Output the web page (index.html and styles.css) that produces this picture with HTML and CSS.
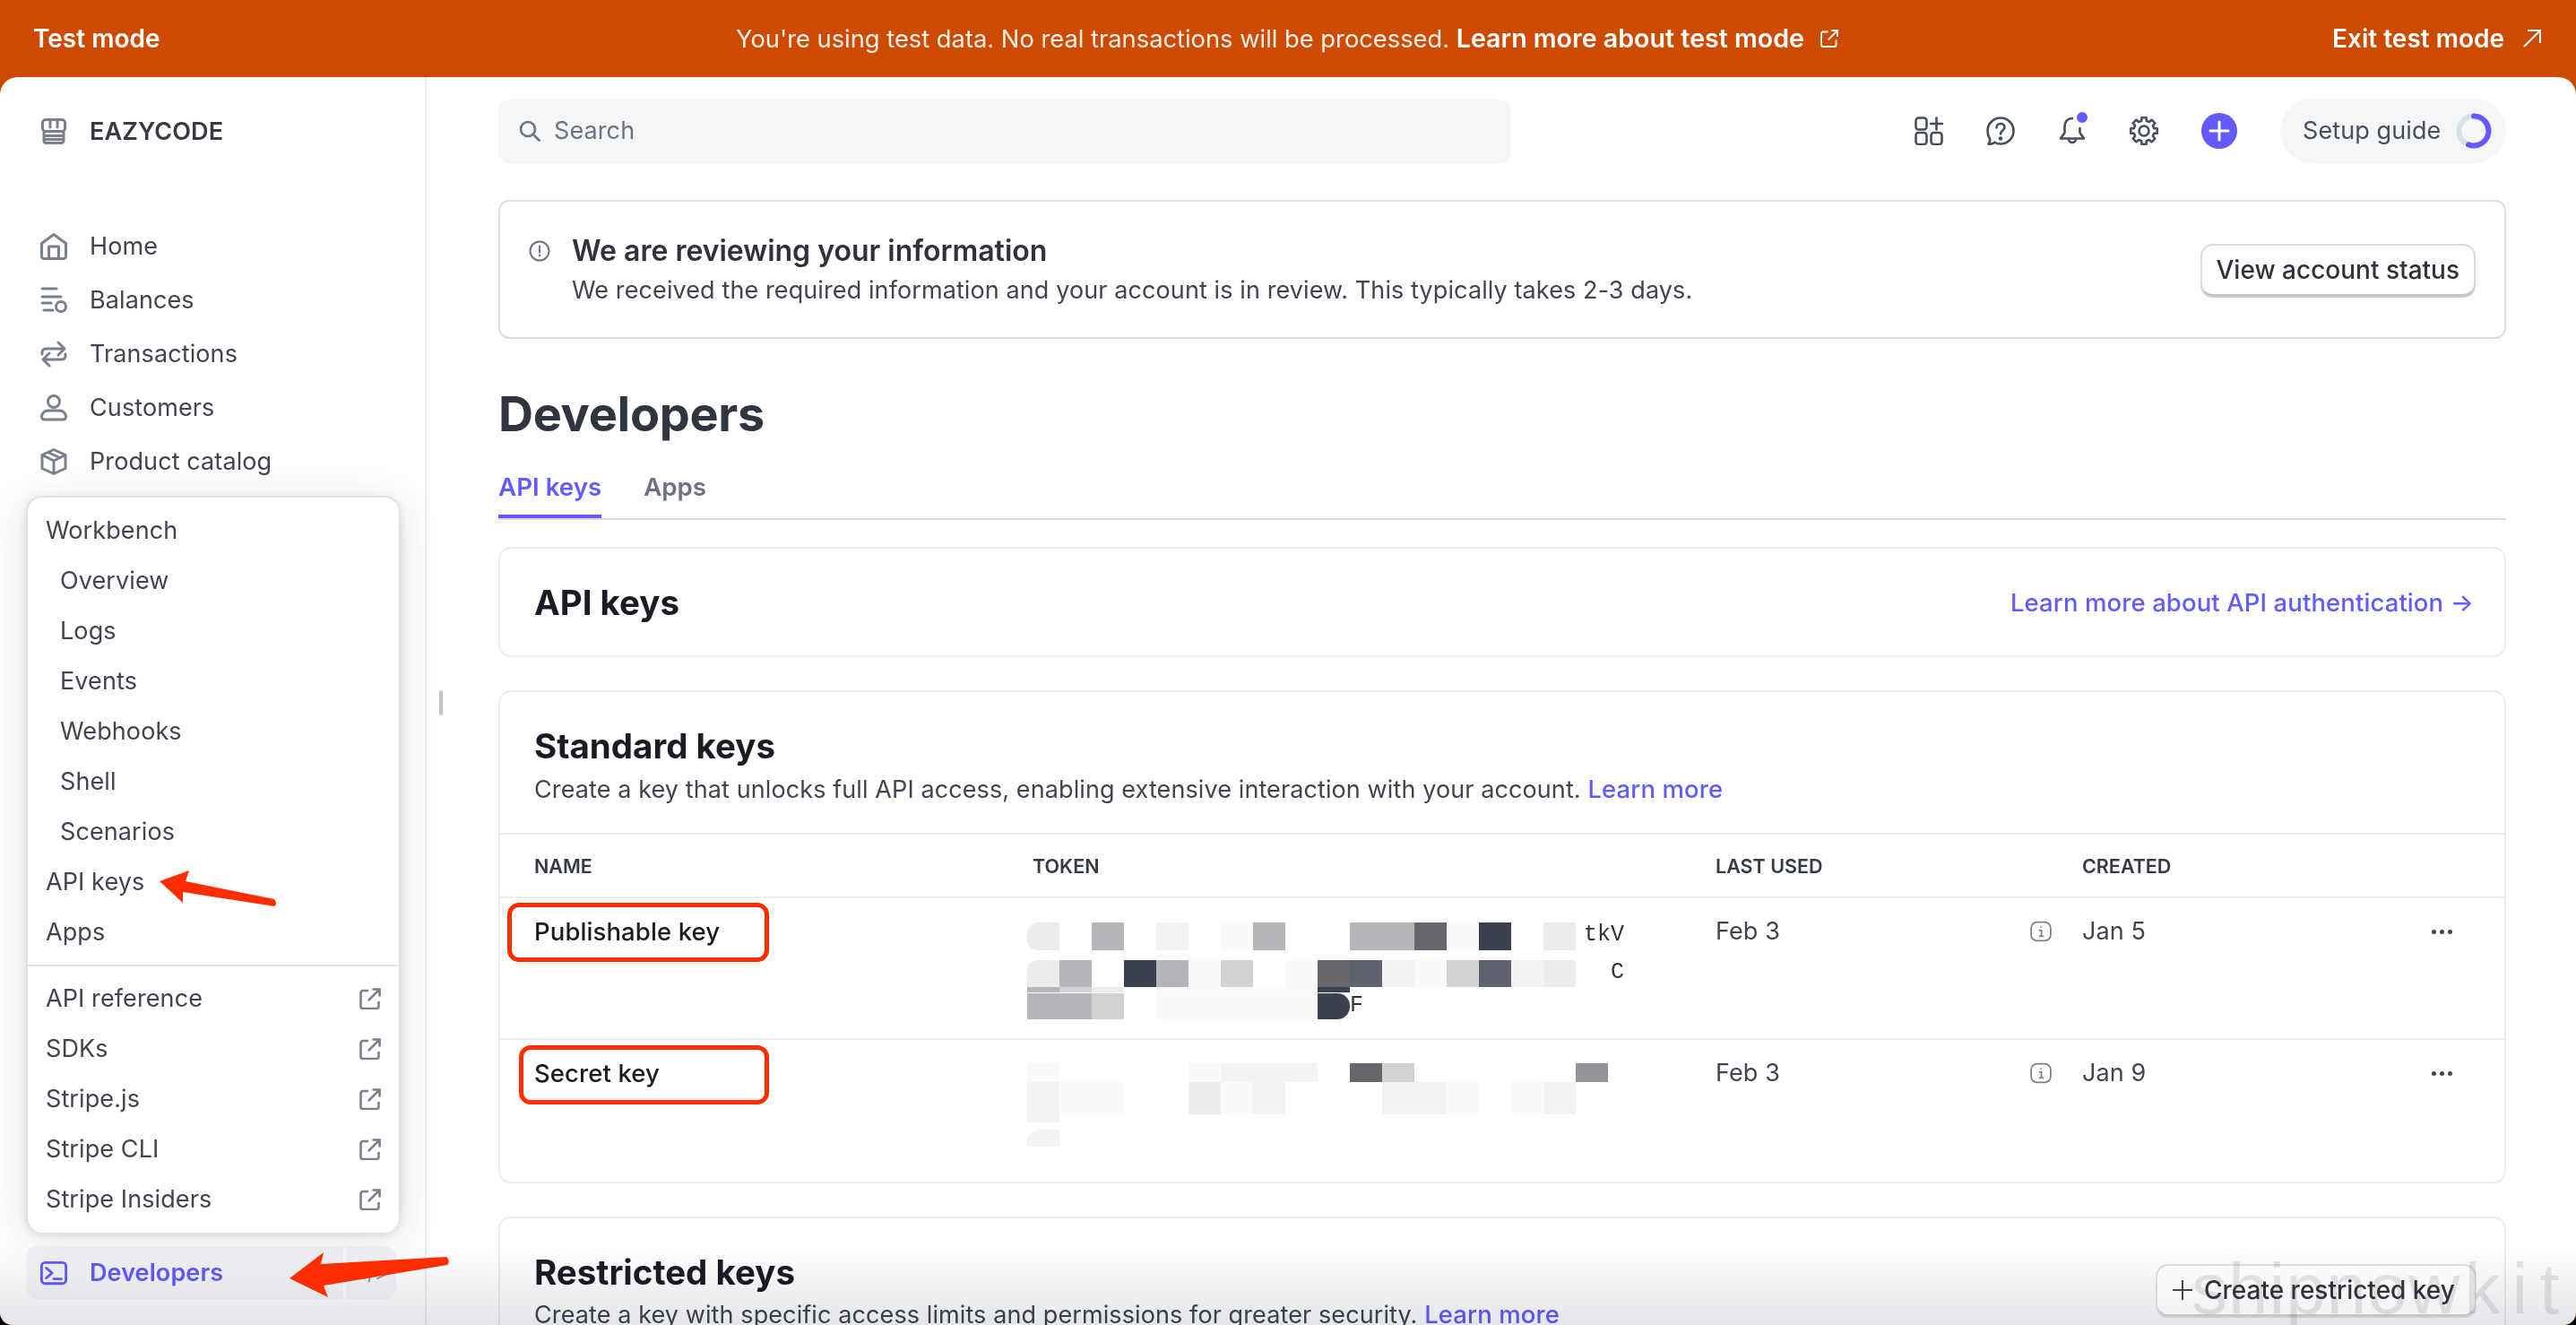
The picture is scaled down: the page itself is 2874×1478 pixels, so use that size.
FILE: index.html
```html
<!DOCTYPE html>
<html>

<head>
    <title>Developers - API keys</title>
    <meta name="viewport" content="width=device-width, initial-scale=1">
    <link rel="stylesheet" href="styles.css">
</head>

<body>
    <div class="window">
        <div class="testbar">
            <div class="testbar-label">Test mode</div>
            <div class="testbar-msg">
                <span>You're using test data. No real transactions will be processed. <b>Learn more about test mode</b></span>
                <svg class="ext-small" viewBox="0 0 16 16"><path d="M7 2.500H3a1.500 1.500 0 0 0-1.500 1.500v9A1.500 1.500 0 0 0 3 14.500h9a1.500 1.500 0 0 0 1.500-1.500V9M9.500 1.500h5v5M14.500 1.500L7 9"/></svg>
            </div>
            <div class="testbar-exit">Exit test mode
                <svg class="exit-arrow" viewBox="0 0 22 22"><path d="M2 20L20 2M6 2h14v14"/></svg>
            </div>
        </div>

        <div class="app">
            <div class="sidebar">
                <div class="brand">
                    <svg class="nav-icon" viewBox="0 0 30 30"><path d="M4 15V25a2.500 2.500 0 0 0 2.500 2.500h17A2.500 2.500 0 0 0 26 25V15M2.500 5a3.500 3.500 0 0 1 3.500-3.500h18A3.500 3.500 0 0 1 27.500 5v6a3.500 3.500 0 0 1-3.500 3.500H6A3.500 3.500 0 0 1 2.500 11zM11 2v8M19 2v8M4 19.500h22M4 23.500h22"/></svg>
                    <span>EAZYCODE</span>
                </div>
                <div class="nav">
                    <div class="nav-item">
                        <svg class="nav-icon" viewBox="0 0 30 30"><path d="M1.500 11.500L15 1.500l13.500 10V26a2.500 2.500 0 0 1-2.500 2.500H4A2.500 2.500 0 0 1 1.500 26zM9.500 28.500V15h11v13.500"/></svg>
                        Home
                    </div>
                    <div class="nav-item">
                        <svg class="nav-icon" viewBox="0 0 30 30"><path d="M2 2h16M2 11h21M2 18h10M4 26h10"/><circle cx="23" cy="22" r="5.500"/></svg>
                        Balances
                    </div>
                    <div class="nav-item">
                        <svg class="nav-icon" viewBox="0 0 30 30"><path d="M2 15v-2a4 4 0 0 1 4-4h21M20 2l7 7-7 7M28 15v2a4 4 0 0 1-4 4H3M10 14l-7 7 7 7"/></svg>
                        Transactions
                    </div>
                    <div class="nav-item">
                        <svg class="nav-icon" viewBox="0 0 30 30"><circle cx="15" cy="8" r="6.500"/><path d="M1.500 25a7 7 0 0 1 7-7h13a7 7 0 0 1 7 7 3 3 0 0 1-3 3h-21a3 3 0 0 1-3-3z"/></svg>
                        Customers
                    </div>
                    <div class="nav-item">
                        <svg class="nav-icon" viewBox="0 0 30 30"><path d="M15 1.500L28 7.500v15L15 28.500 2 22.500v-15zM2 7.500l13 6.500 13-6.500M15 14v14.500M8.500 4.500l13 6"/></svg>
                        Product catalog
                    </div>
                </div>

                <div class="dev-row">
                    <svg class="nav-icon" viewBox="0 0 32 28"><rect x="1.500" y="1.500" width="29" height="25" rx="4"/><path d="M7 8l7 6-7 6M16 21h9"/></svg>
                    <span>Developers</span>
                    <div class="dev-pin">&lt;/&gt;</div>
                </div>

                <div class="popup">
                    <div class="popup-item">Workbench</div>
                    <div class="popup-item sub">Overview</div>
                    <div class="popup-item sub">Logs</div>
                    <div class="popup-item sub">Events</div>
                    <div class="popup-item sub">Webhooks</div>
                    <div class="popup-item sub">Shell</div>
                    <div class="popup-item sub">Scenarios</div>
                    <div class="popup-item">API keys</div>
                    <div class="popup-item">Apps</div>
                    <div class="popup-sep"></div>
                    <div class="popup-item">API reference <svg class="ext" viewBox="0 0 24 24"><path d="M10 3H4a2.500 2.500 0 0 0-2.500 2.500v15A2.500 2.500 0 0 0 4 23h15a2.500 2.500 0 0 0 2.500-2.500V15M14.500 1.500h8v8M22.500 1.500L10 14"/></svg></div>
                    <div class="popup-item">SDKs <svg class="ext" viewBox="0 0 24 24"><path d="M10 3H4a2.500 2.500 0 0 0-2.500 2.500v15A2.500 2.500 0 0 0 4 23h15a2.500 2.500 0 0 0 2.500-2.500V15M14.500 1.500h8v8M22.500 1.500L10 14"/></svg></div>
                    <div class="popup-item">Stripe.js <svg class="ext" viewBox="0 0 24 24"><path d="M10 3H4a2.500 2.500 0 0 0-2.500 2.500v15A2.500 2.500 0 0 0 4 23h15a2.500 2.500 0 0 0 2.500-2.500V15M14.500 1.500h8v8M22.500 1.500L10 14"/></svg></div>
                    <div class="popup-item">Stripe CLI <svg class="ext" viewBox="0 0 24 24"><path d="M10 3H4a2.500 2.500 0 0 0-2.500 2.500v15A2.500 2.500 0 0 0 4 23h15a2.500 2.500 0 0 0 2.500-2.500V15M14.500 1.500h8v8M22.500 1.500L10 14"/></svg></div>
                    <div class="popup-item">Stripe Insiders <svg class="ext" viewBox="0 0 24 24"><path d="M10 3H4a2.500 2.500 0 0 0-2.500 2.500v15A2.500 2.500 0 0 0 4 23h15a2.500 2.500 0 0 0 2.500-2.500V15M14.500 1.500h8v8M22.500 1.500L10 14"/></svg></div>
                </div>
                <div class="resize-handle"></div>
            </div>

            <div class="main">
                <div class="topbar">
                    <div class="search">
                        <svg class="search-icon" viewBox="0 0 24 24"><circle cx="10" cy="10" r="8"/><path d="M16 16l6.500 6.500"/></svg>
                        Search
                    </div>
                    <div class="top-actions">
                        <svg class="top-icon" viewBox="0 0 32 32"><rect x="1.500" y="1.500" width="12" height="13" rx="3"/><rect x="1.500" y="18" width="12" height="13" rx="3"/><rect x="18.500" y="18" width="12" height="13" rx="3"/><path d="M24.500 1.500v13M18 8h13"/></svg>
                        <svg class="top-icon" viewBox="0 0 32 32"><path d="M16 1.500c8 0 14.500 6.500 14.500 14.500S24 30.500 16 30.500c-3 0-5-.7-6.500-1.800-1.500 1.300-4 2.300-7 1.800 1.500-1.500 1.800-3.500 1.500-5.500C2.500 22.500 1.500 19.500 1.500 16 1.500 8 8 1.500 16 1.500z"/><path d="M11.500 12.500c0-6 9-6 9-.5 0 3.500-4.500 3.500-4.500 7.500"/><circle class="dot" cx="16" cy="24.500" r="1"/></svg>
                        <div class="bell">
                            <svg class="top-icon" viewBox="0 0 32 32"><path d="M16 2c-5 0-8.500 3.500-8.500 9v7L3 24.500h26L24.500 18v-5M12 24.500c0 6 8 6 8 0"/></svg>
                            <span class="bell-dot"></span>
                        </div>
                        <svg class="top-icon" viewBox="0 0 32 32"><path d="M13.200 4.800L13.400 1.200H18.600L18.800 4.800 21.900 6.100 24.600 3.700 28.300 7.400 25.900 10.100 27.200 13.200 30.800 13.400V18.600L27.200 18.800 25.900 21.900 28.300 24.600 24.600 28.300 21.900 25.900 18.800 27.200 18.600 30.800H13.400L13.200 27.200 10.100 25.900 7.400 28.300 3.700 24.600 6.100 21.900 4.800 18.800 1.200 18.600V13.400L4.800 13.200 6.100 10.100 3.700 7.400 7.400 3.700 10.100 6.100z"/><circle cx="16" cy="16" r="5.500"/></svg>
                        <div class="plus-btn"><svg viewBox="0 0 40 40"><path d="M20 10v20M10 20h20"/></svg></div>
                        <div class="setup">
                            Setup guide
                            <svg class="ring" viewBox="0 0 40 40"><circle class="ring-track" cx="20" cy="20" r="16.500"/><path class="ring-arc" d="M20 3.500A16.500 16.500 0 1 1 14 35.400"/></svg>
                        </div>
                    </div>
                </div>

                <div class="notice">
                    <svg class="notice-icon" viewBox="0 0 24 24"><circle cx="12" cy="12" r="10.500"/><path d="M12 6.500v7M12 16.500v1"/></svg>
                    <div class="notice-text">
                        <div class="notice-title">We are reviewing your information</div>
                        <div>We received the required information and your account is in review. This typically takes 2-3 days.</div>
                    </div>
                    <div class="button">View account status</div>
                </div>

                <h1>Developers</h1>
                <div class="tabs">
                    <div class="tab active">API keys</div>
                    <div class="tab">Apps</div>
                </div>

                <div class="card card-head">
                    <h2>API keys</h2>
                    <div class="link">Learn more about API authentication →</div>
                </div>

                <div class="card keys">
                    <div class="card-title">
                        <h2>Standard keys</h2>
                        <p>Create a key that unlocks full API access, enabling extensive interaction with your account. <span class="link">Learn more</span></p>
                    </div>
                    <div class="row row-head">
                        <div>NAME</div>
                        <div>TOKEN</div>
                        <div>LAST USED</div>
                        <div>CREATED</div>
                    </div>
                    <div class="row row-first">
                        <div class="key-name">Publishable key</div>
                        <div class="mosaic">
                            <div class="m-row h31 after-one"><i class="g3 left"></i><i></i><i class="g5"></i><i></i><i class="g2"></i><i></i><i class="g1"></i><i class="g5"></i><i></i><i></i><i class="g5"></i><i class="g5"></i><i class="g7"></i><i class="g1"></i><i class="g9"></i><i></i><i class="g3"></i><i class="tail">tkV</i></div>
                            <div class="m-row h30"><i class="g3 left-top"></i><i class="g5"></i><i></i><i class="g9"></i><i class="g5"></i><i class="g1"></i><i class="g4"></i><i></i><i class="g1"></i><i class="g7"></i><i class="g8"></i><i class="g2"></i><i class="g1"></i><i class="g4"></i><i class="g8"></i><i class="g2"></i><i class="g3"></i><i class="tail">C</i></div>
                            <div class="m-row h6"><i class="g5"></i><i class="g4"></i><i class="g3"></i><i></i><i class="g1"></i><i class="g1"></i><i class="g1"></i><i class="g1"></i><i class="g1"></i><i class="g9"></i></div>
                            <div class="m-row h29 after-sliver"><i class="g5"></i><i class="g5"></i><i class="g4"></i><i></i><i class="g1"></i><i class="g1"></i><i class="g1"></i><i class="g1"></i><i class="g1"></i><i class="g9 right"></i><i class="tail short">F</i></div>
                        </div>
                        <div class="used">Feb 3 <svg class="info" viewBox="0 0 22 22"><rect x="1" y="1.500" width="20" height="19" rx="6"/><path d="M9 10h2.500v6M9 16h5M11 6v1"/></svg></div>
                        <div class="created">Jan 5 <div class="dots"><i></i><i></i><i></i></div></div>
                    </div>
                    <div class="row row-second">
                        <div class="key-name">Secret key</div>
                        <div class="mosaic second">
                            <div class="m-row h21"><i class="g1"></i><i></i><i></i><i></i><i></i><i class="g1"></i><i class="g2"></i><i class="g2"></i><i class="g2"></i><i></i><i class="g7"></i><i class="g4"></i><i></i><i></i><i></i><i></i><i></i><i class="g6"></i></div>
                            <div class="m-row h36"><i class="g2"></i><i class="g1"></i><i class="g1"></i><i></i><i></i><i class="g3"></i><i class="g1"></i><i class="g2"></i><i></i><i></i><i></i><i class="g2"></i><i class="g2"></i><i class="g1"></i><i></i><i class="g1"></i><i class="g2"></i></div>
                            <div class="m-row h9"><i class="g2"></i></div>
                            <div class="m-row h19 spaced"><i class="g2 top-left"></i></div>
                        </div>
                        <div class="used">Feb 3 <svg class="info" viewBox="0 0 22 22"><rect x="1" y="1.500" width="20" height="19" rx="6"/><path d="M9 10h2.500v6M9 16h5M11 6v1"/></svg></div>
                        <div class="created">Jan 9 <div class="dots"><i></i><i></i><i></i></div></div>
                    </div>
                </div>

                <div class="card restricted">
                    <div class="card-title">
                        <h2>Restricted keys</h2>
                        <p>Create a key with specific access limits and permissions for greater security. <span class="link">Learn more</span></p>
                    </div>
                </div>
            </div>
        </div>

        <div class="fade"></div>
        <div class="button floating"><svg viewBox="0 0 24 24"><path d="M12 1v22M1 12h22"/></svg>Create restricted key</div>
        <div class="watermark">shipnow<span>kit</span></div>

        <div class="mark mark-one"></div>
        <div class="mark mark-two"></div>
        <svg class="arrows" viewBox="0 0 2874 1478">
            <path d="M178 983L211 971 207 983 306 1003Q310 1008 306 1011L204 995 204 1007z"/>
            <path d="M323 1426L361 1397 358 1410 498 1402Q503 1406 499 1411L361 1434 366 1447z"/>
        </svg>
    </div>
</body>

</html>
```

FILE: styles.css
```css
html, body {
    margin: 0;
    background: #000;
}

.window {
    position: relative;
    width: 2874px;
    height: 1478px;
    overflow: hidden;
    background: #cc4b00;
    border-radius: 0 0 14px 14px;
    font-family: Inter, "Liberation Sans", sans-serif;
    font-size: 27px;
    letter-spacing: .1px;
    line-height: 36px;
    color: #414552;
}

/* test mode banner */
.testbar {
    display: grid;
    grid-template-columns: 1fr auto 1fr;
    align-items: center;
    height: 86px;
    padding: 0 38px 0 37px;
    color: #fff;
    font-size: 28px;
    letter-spacing: 0;
}

.testbar-label {
    font-weight: 600;
}

.testbar-msg {
    display: flex;
    align-items: center;
    font-size: 27.300px;
    color: #fdf0e8;
}

.testbar-msg b {
    font-size: 28.600px;
    font-weight: 600;
    color: #fff;
}

.ext-small {
    width: 22px;
    height: 22px;
    margin-left: 17px;
    fill: none;
    stroke: #fff;
    stroke-width: 1.4;
}

.testbar-exit {
    display: flex;
    justify-content: flex-end;
    align-items: center;
    gap: 20px;
    font-weight: 600;
}

.exit-arrow {
    width: 22px;
    height: 22px;
    fill: none;
    stroke: #fff;
    stroke-width: 2;
}

.app {
    display: flex;
    height: 1392px;
    background: #fff;
    border-radius: 20px 20px 0 0;
    overflow: hidden;
}

/* sidebar */
.sidebar {
    position: relative;
    flex: none;
    display: flex;
    flex-direction: column;
    box-sizing: border-box;
    width: 476px;
    padding: 31px 32px 29px 29px;
    border-right: 2px solid #ebeef1;
}

.brand, .nav-item, .dev-row {
    display: flex;
    align-items: center;
    gap: 25px;
    padding-left: 16px;
    height: 60px;
}

.brand {
    margin-bottom: 68px;
    font-weight: 600;
    color: #353a44;
}

.nav-icon {
    flex: none;
    width: 30px;
    height: 30px;
    fill: none;
    stroke: #7b808c;
    stroke-width: 3;
    stroke-linecap: round;
    stroke-linejoin: round;
}

.dev-row {
    position: relative;
    margin-top: auto;
    height: 59px;
    background: #f5f6f8;
    border-radius: 12px;
    font-weight: 600;
    color: #635bff;
}

.dev-row .nav-icon {
    stroke: #635bff;
}

.dev-pin {
    margin-left: auto;
    align-self: stretch;
    display: flex;
    align-items: center;
    justify-content: center;
    width: 56px;
    border-left: 3px solid #fff;
    font-size: 22px;
    font-weight: 400;
    color: #8a8f9a;
}

.popup {
    position: absolute;
    left: 29px;
    top: 467px;
    width: 418px;
    box-sizing: border-box;
    padding: 9px 0;
    background: #fff;
    border: 2px solid #dfe3e8;
    border-bottom: none;
    border-radius: 18px;
    box-shadow: 0 8px 44px rgba(60, 66, 87, .16), 0 2px 8px rgba(60, 66, 87, .12);
}

.popup-item {
    display: flex;
    align-items: center;
    justify-content: space-between;
    height: 56px;
    padding: 0 20px;
}

.sub {
    padding-left: 36px;
}

.popup-sep {
    height: 2px;
    margin: 8px 0 8px;
    background: #e0e4e9;
}

.ext {
    width: 24px;
    height: 24px;
    fill: none;
    stroke: #7b808c;
    stroke-width: 2.6;
}

.resize-handle {
    position: absolute;
    left: 490px;
    top: 684px;
    width: 4px;
    height: 28px;
    border-radius: 2px;
    background: #c0c3cb;
}

/* main column */
.main {
    flex: 1;
    padding: 24px 78px 0 80px;
    min-width: 0;
}

.topbar {
    display: flex;
    justify-content: space-between;
    align-items: center;
    height: 72px;
    margin-bottom: 41px;
}

.search {
    display: flex;
    align-items: center;
    gap: 15px;
    box-sizing: border-box;
    width: 1129px;
    height: 71px;
    padding-left: 23px;
    background: #f5f6f8;
    border-radius: 12px;
    color: #6c7280;
}

.search-icon {
    width: 24px;
    height: 24px;
    fill: none;
    stroke: #6c7280;
    stroke-width: 2.6;
    stroke-linecap: round;
}

.top-actions {
    display: flex;
    align-items: center;
}

.top-icon {
    display: block;
    width: 32px;
    height: 32px;
    margin-right: 48px;
    fill: none;
    stroke: #474e5c;
    stroke-width: 2.6;
    stroke-linecap: round;
    stroke-linejoin: round;
}

.top-icon .dot {
    fill: #474e5c;
}

.bell {
    position: relative;
}

.bell-dot {
    position: absolute;
    left: 21px;
    top: -5px;
    width: 12px;
    height: 12px;
    border-radius: 50%;
    background: #635bff;
}

.plus-btn {
    width: 40px;
    height: 40px;
    margin-right: 48px;
    border-radius: 50%;
    background: #635bff;
}

.plus-btn svg {
    display: block;
    fill: none;
    stroke: #fff;
    stroke-width: 3;
    stroke-linecap: round;
}

.setup {
    display: flex;
    align-items: center;
    justify-content: space-between;
    box-sizing: border-box;
    width: 252px;
    height: 72px;
    padding: 0 16px 0 25px;
    border-radius: 36px;
    background: #f5f6f8;
    color: #474e5c;
}

.ring {
    width: 40px;
    height: 40px;
    fill: none;
    stroke-width: 6;
}

.ring-track {
    stroke: #dcdfe5;
}

.ring-arc {
    stroke: #635bff;
    stroke-linecap: round;
}

.notice {
    display: flex;
    align-items: center;
    box-sizing: border-box;
    height: 155px;
    padding: 0 32px 0 32px;
    border: 2px solid #d8dee4;
    border-radius: 12px;
}

.notice-icon {
    flex: none;
    align-self: flex-start;
    width: 24px;
    height: 24px;
    margin: 43px 24px 0 0;
    fill: none;
    stroke: #6c7280;
    stroke-width: 2;
    stroke-linecap: round;
}

.notice-text {
    flex: 1;
    padding-top: 2px;
}

.notice-title {
    margin-bottom: 8px;
    font-size: 32px;
    letter-spacing: 0;
    font-weight: 600;
    color: #30313d;
}

.button {
    display: flex;
    align-items: center;
    box-sizing: border-box;
    height: 58px;
    padding: 0 16px;
    border: 2px solid #d8dbe1;
    border-bottom-color: #c0c4cc;
    border-radius: 14px;
    background: #fff;
    box-shadow: 0 2px 0 #c9ccd3;
    font-size: 28px;
    letter-spacing: 0;
    font-weight: 500;
    color: #30313d;
    white-space: nowrap;
}

h1 {
    margin: 52px 0 0;
    font-size: 54px;
    line-height: 64px;
    letter-spacing: -.3px;
    font-weight: 700;
    color: #30353f;
}

.tabs {
    display: flex;
    gap: 47px;
    height: 68px;
    margin-top: 16px;
    border-bottom: 2px solid #d8dbe1;
}

.tab {
    height: 68px;
    box-sizing: border-box;
    padding-top: 15px;
    font-size: 27.700px;
    letter-spacing: 0;
    font-weight: 600;
    color: #6c7280;
}

.tab.active {
    color: #635bff;
    border-bottom: 4px solid #635bff;
}

.card {
    box-sizing: border-box;
    margin-top: 37px;
    border: 2px solid #ebeef1;
    border-radius: 14px;
}

.card-head {
    display: flex;
    justify-content: space-between;
    align-items: center;
    height: 123px;
    margin-top: 30px;
    padding: 0 34px 0 38px;
}

h2 {
    margin: 0;
    font-size: 38.500px;
    line-height: 44px;
    letter-spacing: 0;
    font-weight: 700;
    color: #1a1b25;
}

.link {
    color: #635bff;
    font-size: 27.500px;
    font-weight: 500;
    letter-spacing: .1px;
}

.keys {
    height: 550px;
}

.card-title {
    height: 159px;
    box-sizing: border-box;
    padding: 38px 38px 0;
    border-bottom: 2px solid #ebeef1;
}

.card-title p {
    margin: 8px 0 0;
}

.restricted {
    height: 300px;
}

.restricted .card-title {
    border-bottom: none;
}

.restricted .card-title p {
    margin-top: 7px;
}

.row {
    display: grid;
    grid-template-columns: 556px 762px 409px 1fr;
    padding: 0 38px;
    border-bottom: 2px solid #ebeef1;
}

.row-head {
    height: 71px;
    box-sizing: border-box;
    align-items: center;
    font-size: 21.500px;
    letter-spacing: 0;
    font-weight: 600;
    color: #353a44;
}

.row-first {
    height: 158px;
    box-sizing: border-box;
    padding-top: 19px;
}

.row-second {
    box-sizing: border-box;
    padding-top: 19px;
    border-bottom: none;
}

.key-name {
    font-size: 27.500px;
    font-weight: 500;
    color: #1a1b25;
}

.mosaic {
    margin: 8px 0 0 -6px;
}

.mosaic.second {
    margin-top: 7px;
}

.m-row {
    display: flex;
}

.m-row i {
    flex: none;
    width: 36px;
    font-style: normal;
}

.h31 { height: 31px; }
.h30 { height: 30px; }
.h29 { height: 29px; }
.h21 { height: 21px; }
.h36 { height: 36px; }
.h19 { height: 19px; }
.h9 { height: 9px; }
.h6 { height: 6px; }
.after-one { margin-bottom: 11px; }
.after-sliver { margin-top: 1px; }
.spaced { margin-top: 8px; }

.g1 { background: #fafafa; }
.g2 { background: #f3f3f4; }
.g3 { background: #ececed; }
.g4 { background: #d2d2d4; }
.g5 { background: #b5b6ba; }
.g6 { background: #949599; }
.g7 { background: #66676c; }
.g8 { background: #5e626c; }
.g9 { background: #3c4150; }

.left { border-radius: 12px 0 0 12px; }
.left-top { border-radius: 12px 0 0 0; }
.right { border-radius: 0 14px 14px 0; }
.top-left { border-radius: 14px 0 0 0; }

.m-row i.tail {
    width: 54px;
    font-size: 25px;
    line-height: 28px;
    letter-spacing: 0;
    text-align: right;
    color: #30313d;
    font-family: "Liberation Mono", monospace;
}

.m-row i.short {
    width: 18px;
    line-height: 28px;
    text-align: left;
}

.used, .created {
    display: flex;
    justify-content: space-between;
    align-items: flex-start;
}

.used {
    padding-right: 34px;
}

.created {
    padding-right: 20px;
}

.info {
    width: 24px;
    height: 24px;
    margin-top: 6px;
    fill: none;
    stroke: #7b808c;
    stroke-width: 1.6;
}

.dots {
    display: flex;
    gap: 4px;
    margin-top: 16px;
}

.dots i {
    width: 5px;
    height: 5px;
    border-radius: 50%;
    background: #414552;
}

/* things that lie over the page */
.fade {
    position: absolute;
    left: 0;
    right: 0;
    bottom: 0;
    height: 90px;
    background: linear-gradient(#fff, #e4e5e8);
    mix-blend-mode: multiply;
}

.watermark {
    position: absolute;
    left: 2445px;
    top: 1392px;
    font-family: "Liberation Sans", sans-serif;
    font-size: 80px;
    line-height: 92px;
    letter-spacing: 1px;
    white-space: nowrap;
    color: rgba(60, 60, 70, .13);
}

.watermark span {
    margin-left: 4px;
    letter-spacing: 13px;
}

.floating {
    position: absolute;
    left: 2405px;
    top: 1410px;
    width: 358px;
    gap: 12px;
    background: rgba(255, 255, 255, .45);
}

.floating svg {
    width: 24px;
    height: 24px;
    fill: none;
    stroke: #414552;
    stroke-width: 2;
}

.mark {
    position: absolute;
    box-sizing: border-box;
    height: 66px;
    border: 5px solid #ff2d00;
    border-radius: 13px;
}

.mark-one {
    left: 566px;
    top: 1007px;
    width: 292px;
}

.mark-two {
    left: 579px;
    top: 1166px;
    width: 279px;
}

.arrows {
    position: absolute;
    left: 0;
    top: 0;
    width: 2874px;
    height: 1478px;
    fill: #ff2d00;
    pointer-events: none;
}
```
